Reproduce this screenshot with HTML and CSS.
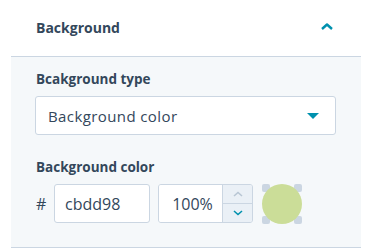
FILE: index.html
```html
<!DOCTYPE html>
<html lang="en">
<head>
  <meta charset="UTF-8">
  <title>Background</title>
  <meta name="viewport" content="width=device-width, initial-scale=1">
  <link rel="stylesheet" href="styles.css">
</head>
<body>
  <div class="panel">
    <div class="panel-header">
      <span class="panel-title">Background</span>
      <svg class="chevron" width="12" height="7" viewBox="0 0 12 7">
        <path d="M1 6 L6 1.5 L11 6" fill="none" stroke="#0091ae" stroke-width="2.4" stroke-linejoin="round"/>
      </svg>
    </div>
    <div class="panel-body">
      <div class="field">
        <label class="field-label">Bcakground type</label>
        <div class="select">
          <span>Background color</span>
          <svg width="12" height="6" viewBox="0 0 12 6"><path d="M0 0 H12 L6 6 Z" fill="#0091ae"/></svg>
        </div>
      </div>
      <div class="field">
        <label class="field-label">Background color</label>
        <div class="color-row">
          <span class="hash">#</span>
          <div class="text-input">cbdd98</div>
          <div class="number-input">
            <span class="number-value">100%</span>
            <div class="stepper">
              <div class="step">
                <svg width="10" height="6" viewBox="0 0 10 6"><path d="M1 5 L5 1.5 L9 5" fill="none" stroke="#b8c6d4" stroke-width="1.6"/></svg>
              </div>
              <div class="step">
                <svg width="10" height="6" viewBox="0 0 10 6"><path d="M1 1 L5 4.5 L9 1" fill="none" stroke="#0091ae" stroke-width="1.6"/></svg>
              </div>
            </div>
          </div>
          <div class="swatch">
            <i class="handle tl"></i><i class="handle tr"></i>
            <i class="handle bl"></i><i class="handle br"></i>
            <div class="swatch-dot" style="background:#cbdd98"></div>
          </div>
        </div>
      </div>
    </div>
  </div>
</body>
</html>
```

FILE: styles.css
```css
* {
  box-sizing: border-box;
  font-family: 'Open Sans', sans-serif;
}
body {
  margin: 0;
  background: #fff;
  color: #33475b;
}
.panel {
  width: 350px;
  margin-left: 11px;
}
.panel-header {
  height: 57px;
  padding: 0 28px 0 25px;
  display: flex;
  align-items: center;
  justify-content: space-between;
  border-bottom: 1px solid #cbd6e2;
  background: #fff;
}
.panel-title {
  font-size: 14px;
  font-weight: 700;
  margin-top: -2px;
}
.chevron {
  margin-top: -3px;
}
.panel-body {
  background: #f5f8fa;
  padding: 12px 25px 24px;
  border-bottom: 1px solid #cbd6e2;
}
.field + .field {
  margin-top: 22px;
}
.field-label {
  display: block;
  font-size: 13.5px;
  font-weight: 700;
  line-height: 20px;
  margin-bottom: 7px;
}
.select {
  height: 39px;
  width: 301px;
  margin-left: -1px;
  background: #fff;
  border: 1px solid #cbd6e2;
  border-radius: 3px;
  display: flex;
  align-items: center;
  justify-content: space-between;
  padding: 0 16px 0 12px;
  font-size: 15px;
  letter-spacing: 0.4px;
}
.color-row {
  display: flex;
  align-items: center;
  height: 39px;
}
.hash {
  width: 18px;
  font-size: 16px;
}
.text-input {
  width: 96px;
  height: 39px;
  background: #fff;
  border: 1px solid #cbd6e2;
  border-radius: 3px;
  padding-left: 10px;
  display: flex;
  align-items: center;
  font-size: 16px;
}
.number-input {
  margin-left: 8px;
  width: 95px;
  height: 39px;
  border: 1px solid #cbd6e2;
  border-radius: 3px;
  display: flex;
  overflow: hidden;
}
.number-value {
  flex: 1;
  background: #fff;
  display: flex;
  align-items: center;
  justify-content: center;
  font-size: 16px;
  padding-left: 4px;
}
.stepper {
  width: 30px;
  display: flex;
  flex-direction: column;
  background: #eaf0f6;
  border-left: 1px solid #cbd6e2;
}
.step {
  flex: 1;
  display: flex;
  align-items: center;
  justify-content: center;
}
.step + .step {
  border-top: 1px solid #cbd6e2;
}
.swatch {
  position: relative;
  margin-left: 9px;
  width: 40px;
  height: 40px;
  display: flex;
  align-items: center;
  justify-content: center;
}
.swatch-dot {
  position: relative;
  width: 40px;
  height: 40px;
  border-radius: 50%;
}
.handle {
  position: absolute;
  width: 8px;
  height: 8px;
  border-radius: 2px;
  background: #cbd6e2;
}
.tl { top: 0; left: 0; }
.tr { top: 0; right: 0; }
.bl { bottom: 0; left: 0; }
.br { bottom: 0; right: 0; }
```
